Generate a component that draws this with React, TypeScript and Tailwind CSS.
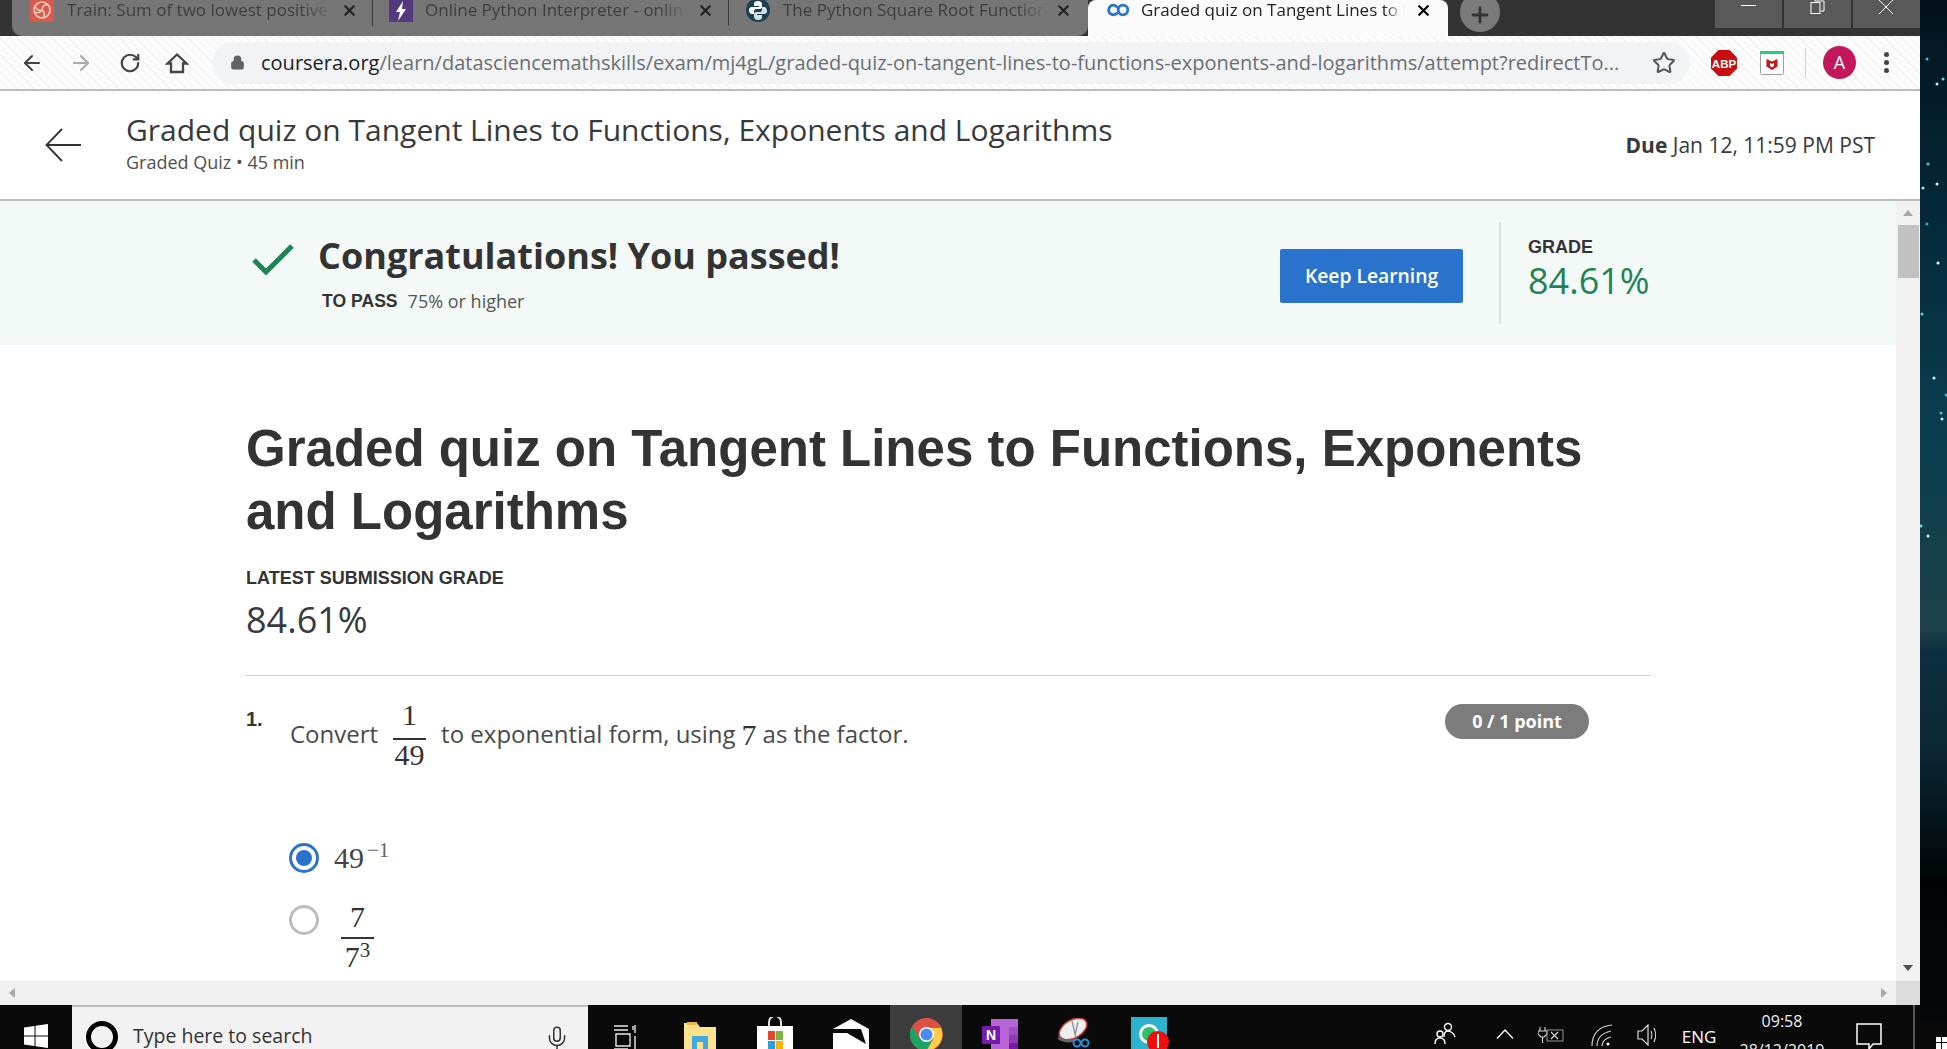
import React from 'react';
import { ArrowLeft, ArrowRight, RotateCw, Lock, Star, X, Plus, Mic } from 'lucide-react';

const url =
  '/learn/datasciencemathskills/exam/mj4gL/graded-quiz-on-tangent-lines-to-functions-exponents-and-logarithms/attempt?redirectTo...';

function SwirlIcon() {
  return (
    <svg width="24" height="22" viewBox="0 0 24 22" className="shrink-0">
      <rect width="24" height="22" fill="#d65a4d" />
      <circle cx="12" cy="10" r="8" fill="none" stroke="#f4c8c0" strokeWidth="1.6" />
      <path d="M12 10c0-4 3-6 6-5M12 10c3 2 3 6 1 8M12 10c-4 1-6-1-7-4M12 10c-2 3-5 3-7 2" fill="none" stroke="#f4c8c0" strokeWidth="1.6" />
    </svg>
  );
}

function BoltIcon() {
  return (
    <svg width="24" height="22" viewBox="0 0 24 22" className="shrink-0">
      <rect width="24" height="22" fill="#54397f" />
      <path d="M14 1 7 12h4l-2 9 8-12h-4z" fill="#fff" />
    </svg>
  );
}

function PythonIcon() {
  return (
    <svg width="24" height="24" viewBox="0 0 24 24" className="shrink-0">
      <circle cx="12" cy="10" r="12" fill="#1d3f52" />
      <path d="M12 1c-3 0-4 1-4 3v2h5v1H6c-2 0-3 1-3 3s1 4 3 4h2v-3c0-1 1-2 2-2h4c1 0 2-1 2-2V4c0-2-2-3-4-3z" fill="#fff" />
      <path d="M12 20c3 0 4-1 4-3v-2h-5v-1h7c2 0 3-1 3-3s-1-4-3-4h-2v3c0 1-1 2-2 2h-4c-1 0-2 1-2 2v3c0 2 2 3 4 3z" fill="#d7e0e6" />
    </svg>
  );
}

function CourseraIcon() {
  return (
    <svg width="24" height="14" viewBox="0 0 24 14" className="shrink-0">
      <path d="M11.500 4.500A4.800 4.800 0 1 0 11.500 9.500" fill="none" stroke="#2a73cc" strokeWidth="2.8" />
      <circle cx="17" cy="7" r="4.800" fill="none" stroke="#2a73cc" strokeWidth="2.8" />
    </svg>
  );
}

function Tab({ icon, title, width, pad, textWidth, gap }: { icon: React.ReactNode; title: string; width: string; pad: string; textWidth: string; gap: string }) {
  return (
    <div className={`flex h-[36px] shrink-0 items-start ${width} ${pad}`}>
      {icon}
      <div className={`whitespace-nowrap overflow-hidden text-[17px] leading-[20px] text-[#3d3d3d] [mask-image:linear-gradient(to_right,#000_88%,transparent)] ${textWidth} ${gap}`}>
        {title}
      </div>
      <X className="ml-auto mt-[2px] shrink-0 text-[#222]" size={17} strokeWidth={3} />
    </div>
  );
}

function TabDivider() {
  return <div className="h-[26px] w-[1px] shrink-0 bg-[#3c3c3c]" />;
}

function TabStrip() {
  return (
    <div className="flex h-[36px] shrink-0 bg-[#333333]">
      <div className="h-[36px] w-[12px] shrink-0 rounded-br-[8px] bg-[#333333]" />
      <div className="flex h-[36px] w-[1076px] shrink-0 rounded-b-[10px] bg-[#767676]">
        <Tab icon={<SwirlIcon />} title="Train: Sum of two lowest positive" width="w-[360px]" pad="pl-[18px] pr-[14px]" textWidth="w-[266px]" gap="ml-[13px]" />
        <TabDivider />
        <Tab icon={<BoltIcon />} title="Online Python Interpreter - online" width="w-[355px]" pad="pl-[16px] pr-[14px]" textWidth="w-[264px]" gap="ml-[12px]" />
        <TabDivider />
        <Tab icon={<PythonIcon />} title="The Python Square Root Function" width="w-[358px]" pad="pl-[17px] pr-[15px]" textWidth="w-[265px]" gap="ml-[13px]" />
      </div>
      <div className="flex h-[36px] w-[360px] shrink-0 items-start rounded-t-[8px] bg-[#fbfbfb] pl-[18px] pr-[16px]">
        <div className="pt-[3px]">
          <CourseraIcon />
        </div>
        <div className="ml-[11px] w-[264px] overflow-hidden whitespace-nowrap text-[17px] leading-[20px] text-[#222] [mask-image:linear-gradient(to_right,#000_92%,transparent)]">
          Graded quiz on Tangent Lines to Functions
        </div>
        <X className="ml-auto mt-[2px] shrink-0 text-black" size={17} strokeWidth={3.2} />
      </div>
      <div className="flex flex-1 items-start">
        <div className="ml-[12px] -mt-[8px] flex h-[40px] w-[40px] shrink-0 items-center justify-center rounded-full bg-[#7a7a7a]">
          <Plus className="mt-[6px] text-[#333]" size={24} strokeWidth={2.8} />
        </div>
        <div className="ml-auto flex h-[28px] overflow-hidden">
          <div className="w-[67px] bg-[#595959] pl-[26px] pt-[5px]">
            <div className="h-[1px] w-[15px] bg-white" />
          </div>
          <div className="ml-[2px] w-[67px] bg-[#595959] pl-[26px]">
            <svg width="15" height="14" viewBox="0 0 15 14" fill="none" stroke="#fff" strokeWidth="1"><path d="M5 0v1h9v10h-3" /><rect x="1" y="2.500" width="9" height="11" /></svg>
          </div>
          <div className="ml-[2px] w-[67px] bg-[#595959] pl-[25px]">
            <svg width="16" height="14" viewBox="0 0 16 14" fill="none" stroke="#fff" strokeWidth="1"><path d="M1 0l14 14M15 0 1 14" /></svg>
          </div>
        </div>
      </div>
    </div>
  );
}

function AbpIcon() {
  return (
    <svg width="26" height="26" viewBox="0 0 26 26">
      <path d="M7.500 0h11L26 7.500v11L18.500 26h-11L0 18.500v-11z" fill="#c70d0d" />
      <text x="13" y="17.500" textAnchor="middle" fontSize="11.500" fontWeight="700" fill="#fff" fontFamily="'Liberation Sans', sans-serif">ABP</text>
    </svg>
  );
}

function McAfeeIcon() {
  return (
    <svg width="24" height="24" viewBox="0 0 24 24">
      <rect x="0.500" y="1" width="23" height="22.500" rx="1" fill="#fff" stroke="#9e9e9e" />
      <rect x="0" y="0" width="24" height="3" fill="#1ed47a" />
      <path d="M6.500 8 12 10.500 17.500 8v7.500L12 19l-5.500-3.500z" fill="#c01818" />
      <path d="M10 12l2 1 2-1v3l-2 1.500L10 15z" fill="#fff" />
    </svg>
  );
}

function Toolbar() {
  return (
    <div className="flex h-[55px] shrink-0 items-center border-b-2 border-[#bdbdbd] bg-[#fbfbfb] bg-[repeating-linear-gradient(45deg,#f1f1f1_0,#f1f1f1_1px,#fcfcfc_1px,#fcfcfc_6px)]">
      <div className="flex w-[56px] justify-end pr-[12px]"><ArrowLeft className="text-[#444]" size={24} strokeWidth={2.1} /></div>
      <div className="flex w-[49px] justify-end pr-[12px]"><ArrowRight className="text-[#aaa]" size={24} strokeWidth={2.1} /></div>
      <div className="flex w-[48px] justify-end pr-[12px]"><RotateCw className="text-[#444]" size={22} strokeWidth={2.4} /></div>
      <div className="flex w-[48px] justify-end pr-[12px]">
        <svg width="24" height="24" viewBox="0 0 24 24" fill="none" stroke="#444" strokeWidth="2.300" strokeLinejoin="miter">
          <path d="M12 3.500 21.500 12.500H18V21H6V12.500H2.500z" />
        </svg>
      </div>
      <div className="ml-[11px] flex h-[42px] w-[1478px] items-center rounded-full bg-[#f1f3f4] pl-[18px]">
        <Lock className="shrink-0 fill-[#5f6368] text-[#5f6368]" size={15} strokeWidth={2.2} />
        <div className="ml-[16px] whitespace-nowrap text-[20px] leading-[28px] text-[#6b6f73]">
          <span className="text-[#202124]">coursera.org</span>
          {url}
        </div>
        <Star className="ml-auto mr-[14px] shrink-0 text-[#555]" size={24} strokeWidth={2} />
      </div>
      <div className="ml-[21px]"><AbpIcon /></div>
      <div className="ml-[23px]"><McAfeeIcon /></div>
      <div className="ml-[21px] h-[30px] w-[1px] bg-[#d0d0d0]" />
      <div className="ml-[17px] flex h-[33px] w-[33px] items-center justify-center rounded-full bg-[#c2185b] text-[18px] text-white">A</div>
      <div className="ml-[28px] flex flex-col gap-[3px]">
        <div className="h-[5px] w-[5px] rounded-full bg-[#444]" />
        <div className="h-[5px] w-[5px] rounded-full bg-[#444]" />
        <div className="h-[5px] w-[5px] rounded-full bg-[#444]" />
      </div>
    </div>
  );
}

function PageHeader() {
  return (
    <div className="flex h-[110px] shrink-0 items-center border-b-2 border-[#bdbdbd] bg-white pr-[45px]">
      <svg width="36" height="36" viewBox="0 0 36 36" fill="none" stroke="#333" strokeWidth="1.8" className="ml-[45px] shrink-0">
        <path d="M36 18H1.500M17 2 1.500 18 17 34" />
      </svg>
      <div className="ml-[45px] -mt-[6px]">
        <div className="text-[30px] leading-[40px] text-[#373a3c]">Graded quiz on Tangent Lines to Functions, Exponents and Logarithms</div>
        <div className="text-[18px] leading-[24px] text-[#4f4f4f]">Graded Quiz • 45 min</div>
      </div>
      <div className="ml-auto mt-[2px] text-[21px] text-[#373a3c]">
        <span className="font-bold">Due</span> Jan 12, 11:59 PM PST
      </div>
    </div>
  );
}

function Banner() {
  return (
    <div className="flex h-[144px] shrink-0 items-center bg-[#f3f9f7]">
      <svg width="42" height="32" viewBox="0 0 42 32" fill="none" stroke="#1f8354" strokeWidth="5" className="ml-[252px] -mt-[26px] shrink-0">
        <path d="M2 16 14 28 40 2" />
      </svg>
      <div className="ml-[24px] -mt-[2px]">
        <div className="text-[36px] font-bold leading-[50px] text-[#333]">Congratulations! You passed!</div>
        <div className="mt-[8px] flex items-center pl-[4px] text-[18px] leading-[24px] text-[#555]">
          <span className="font-['Liberation_Sans',Arial,sans-serif] text-[17.600px] font-bold text-[#333]">TO PASS</span>
          <span className="ml-[10px]">75% or higher</span>
        </div>
      </div>
      <button className="ml-auto mt-[6px] flex h-[54px] w-[183px] shrink-0 items-center justify-center rounded-[2px] bg-[#2a73cc] text-[19.300px] font-semibold text-white">
        Keep Learning
      </button>
      <div className="ml-[36px] h-[102px] w-[2px] shrink-0 bg-[#e1e1e1]" />
      <div className="ml-[27px] mr-[233px] -mt-[5px] w-[135px] shrink-0">
        <div className="font-['Liberation_Sans',Arial,sans-serif] text-[18px] font-bold leading-[20px] text-[#333]">GRADE</div>
        <div className="text-[36px] leading-[48px] text-[#1f8354]">84.61%</div>
      </div>
    </div>
  );
}

function Fraction({ top, bottom, topHeight }: { top: React.ReactNode; bottom: React.ReactNode; topHeight: string }) {
  return (
    <div className="flex flex-col items-center font-['Liberation_Serif',serif] text-[30px] text-[#333]">
      <div className={`leading-[34px] ${topHeight}`}>{top}</div>
      <div className="h-[2px] w-full bg-[#333]" />
      <div className="h-[30px] leading-[30px]">{bottom}</div>
    </div>
  );
}

function Question() {
  return (
    <div>
      <div className="flex items-start">
        <div className="w-[44px] shrink-0 pt-[6px] font-['Liberation_Sans',Arial,sans-serif] text-[20px] font-bold leading-[28px] text-[#333]">1.</div>
        <div className="flex h-[70px] items-center whitespace-nowrap text-[24px] text-[#4a4a4a]">
          <span>Convert</span>
          <div className="mx-[15px] w-[33px]">
            <Fraction top="1" bottom="49" topHeight="h-[40px]" />
          </div>
          <span>to exponential form, using</span>
          <span className="mx-[6px] font-['Liberation_Serif',serif] text-[30px] text-[#333]">7</span>
          <span>as the factor.</span>
        </div>
        <div className="ml-auto mr-[61px] mt-[5px] flex h-[35px] w-[144px] shrink-0 items-center justify-center rounded-full bg-[#7c7c7c] text-[18px] font-bold text-white">
          0 / 1 point
        </div>
      </div>
      <div className="mt-[71px] flex items-center pl-[43px]">
        <div className="flex h-[30px] w-[30px] shrink-0 items-center justify-center rounded-full border-[3px] border-[#2a73cc]">
          <div className="h-[16px] w-[16px] rounded-full bg-[#2a73cc]" />
        </div>
        <div className="ml-[15px] flex items-start font-['Liberation_Serif',serif] text-[30px] leading-[36px] text-[#444]">
          49
          <span className="ml-[3px] mt-[-8px] text-[21px] text-[#666]">−1</span>
        </div>
      </div>
      <div className="mt-[13px] flex items-start pl-[43px]">
        <div className="mt-[16px] h-[30px] w-[30px] shrink-0 rounded-full border-[3px] border-[#bdbdbd]" />
        <div className="ml-[22px] mt-[11px] w-[33px]">
          <Fraction
            top="7"
            bottom={
              <span className="mt-[3px] flex items-start">
                7<span className="mt-[-7px] text-[21px]">3</span>
              </span>
            }
            topHeight="h-[37px]"
          />
        </div>
      </div>
    </div>
  );
}

function Main() {
  return (
    <div className="min-w-0 flex-1 overflow-hidden bg-white">
      <Banner />
      <div className="ml-[246px] w-[1404px] pt-[72px]">
        <h1 className="font-['Liberation_Sans',Arial,sans-serif] text-[51px] font-bold leading-[63px] text-[#333]">
          Graded quiz on Tangent Lines to Functions, Exponents and Logarithms
        </h1>
        <div className="mt-[25px] font-['Liberation_Sans',Arial,sans-serif] text-[18px] font-bold leading-[20px] text-[#333]">LATEST SUBMISSION GRADE</div>
        <div className="mt-[9px] text-[36px] leading-[46px] text-[#373a3c]">84.61%</div>
        <div className="mt-[32px] h-[1px] bg-[#d0d0d0]" />
        <div className="mt-[23px]">
          <Question />
        </div>
      </div>
    </div>
  );
}

function VerticalScrollbar() {
  return (
    <div className="flex w-[24px] shrink-0 flex-col items-center bg-[#f1f1f1]">
      <div className="mt-[9px] h-0 w-0 border-x-[5px] border-b-[6px] border-x-transparent border-b-[#a6a6a6]" />
      <div className="mt-[9px] h-[53px] w-[21px] bg-[#c1c1c1]" />
      <div className="mt-auto mb-[10px] h-0 w-0 border-x-[5px] border-t-[6px] border-x-transparent border-t-[#505050]" />
    </div>
  );
}

function HorizontalScrollbar() {
  return (
    <div className="flex h-[24px] shrink-0 items-center bg-[#f0f0f0]">
      <div className="ml-[9px] h-0 w-0 border-y-[5px] border-r-[6px] border-y-transparent border-r-[#a6a6a6]" />
      <div className="ml-auto mr-[9px] h-0 w-0 border-y-[5px] border-l-[6px] border-y-transparent border-l-[#a6a6a6]" />
      <div className="h-[24px] w-[24px] bg-[#dcdcdc]" />
    </div>
  );
}

function TaskCell({ width, top, active, children }: { width: string; top: string; active?: boolean; children: React.ReactNode }) {
  return (
    <div className={`flex h-[44px] shrink-0 justify-center ${width} ${top} ${active ? 'bg-[#3c3c3c]' : ''}`}>{children}</div>
  );
}

function Taskbar() {
  return (
    <div className="flex h-[44px] shrink-0 overflow-hidden bg-[#0a0a0b] text-white">
      <div className="flex w-[72px] shrink-0 justify-center pt-[19px]">
        <svg width="24" height="24" viewBox="0 0 24 24" fill="#fff"><path d="M0 3.500 10.500 2v9.500H0zM11.500 1.800 24 0v11.500H11.500zM0 12.500h10.500V22L0 20.500zM11.500 12.500H24V24l-12.500-1.800z" /></svg>
      </div>
      <div className="flex h-[44px] w-[516px] shrink-0 items-start border-t-2 border-[#bdbdbd] bg-[#f2f2f2] pl-[14px]">
        <div className="mt-[14px] h-[32px] w-[32px] shrink-0 rounded-full border-[5px] border-black" />
        <div className="ml-[15px] mt-[15px] text-[19.500px] leading-[28px] text-[#333]">Type here to search</div>
        <Mic className="ml-auto mr-[18px] mt-[18px] shrink-0 text-[#333]" size={26} strokeWidth={1.4} />
      </div>
      <TaskCell width="w-[74px]" top="pt-[20px]">
        <svg width="24" height="26" viewBox="0 0 24 26" fill="none" stroke="#e8e8e8" strokeWidth="1.4">
          <path d="M1 1h14M1 5h14M20 1v4M22 0v8M3 9h14v12H3zM22 11v14M1 24h14" />
        </svg>
      </TaskCell>
      <TaskCell width="w-[75px]" top="pt-[17px]">
        <svg width="32" height="30" viewBox="0 0 32 30">
          <path d="M0 1h13l3 4h16v25H0z" fill="#fde28d" />
          <rect x="3" y="0" width="10" height="3" fill="#e9b949" />
          <path d="M8 30V14h16v16h-5V20h-6v10z" fill="#3fa9e0" />
        </svg>
      </TaskCell>
      <TaskCell width="w-[75px]" top="pt-[12px]">
        <svg width="36" height="34" viewBox="0 0 36 34">
          <path d="M12 10V5a6 6 0 0 1 12 0v5" fill="none" stroke="#e0e0e0" strokeWidth="2" />
          <rect y="9" width="36" height="25" fill="#fff" />
          <rect x="11" y="14" width="7" height="9" fill="#e8452c" /><rect x="19" y="14" width="7" height="9" fill="#7cb342" />
          <rect x="11" y="24" width="7" height="9" fill="#2a9fd8" /><rect x="19" y="24" width="7" height="9" fill="#f5b400" />
        </svg>
      </TaskCell>
      <TaskCell width="w-[78px]" top="pt-[14px]">
        <svg width="36" height="32" viewBox="0 0 36 32">
          <path d="M18 0 36 10v22H0V10z" fill="#fff" />
          <path d="M0 10h28l5 15-19-11H0z" fill="#0a0a0b" />
        </svg>
      </TaskCell>
      <TaskCell width="w-[72px]" top="pt-[13px]" active>
        <svg width="33" height="33" viewBox="0 0 33 33">
          <circle cx="16.500" cy="16.500" r="16.500" fill="#dd5144" />
          <path d="M2.200 8.200A16.500 16.500 0 0 0 16.500 33l7-12.500h-14z" fill="#1da462" />
          <path d="M16.500 10H31a16.500 16.500 0 0 1-14.500 23l7-12.500z" fill="#ffcd46" />
          <circle cx="16.500" cy="16.500" r="7.500" fill="#fff" />
          <circle cx="16.500" cy="16.500" r="6" fill="#4c8bf5" />
        </svg>
      </TaskCell>
      <TaskCell width="w-[75px]" top="pt-[14px]">
        <svg width="36" height="30" viewBox="0 0 36 30">
          <rect x="9" width="27" height="30" fill="#b765d6" />
          <rect x="27" y="8" width="9" height="8" fill="#a04ec4" /><rect x="27" y="16" width="9" height="8" fill="#8f3bb2" /><rect x="27" y="24" width="9" height="6" fill="#7719aa" />
          <rect y="7" width="18" height="18" rx="1" fill="#7719aa" />
          <text x="9" y="21" textAnchor="middle" fontSize="14" fontWeight="700" fill="#fff" fontFamily="'Liberation Sans', sans-serif">N</text>
        </svg>
      </TaskCell>
      <TaskCell width="w-[75px]" top="pt-[13px]">
        <svg width="34" height="32" viewBox="0 0 34 32">
          <ellipse cx="15" cy="11" rx="15" ry="9" transform="rotate(-30 15 11)" fill="#eee" stroke="#d23a3a" strokeWidth="1.5" />
          <path d="M1 17c6 6 12 5 17 3l-3 4c-6 1-12 0-15-3z" fill="#666" />
          <path d="M14 3l4 17M20 4l-3 13" stroke="#888" strokeWidth="1.2" />
          <circle cx="19" cy="25" r="3.500" fill="none" stroke="#2a8fd8" strokeWidth="2" />
          <circle cx="27" cy="25" r="3.500" fill="none" stroke="#2a8fd8" strokeWidth="2" />
        </svg>
      </TaskCell>
      <TaskCell width="w-[75px]" top="pt-[12px]">
        <svg width="38" height="32" viewBox="0 0 38 32">
          <rect width="36" height="32" fill="#2bb3cf" />
          <circle cx="18" cy="17" r="10" fill="#fff" />
          <circle cx="18" cy="17" r="7" fill="#27c26a" />
          <circle cx="27" cy="25" r="11" fill="#ef0f0f" />
          <rect x="26" y="17" width="2" height="14" fill="#fff" />
        </svg>
      </TaskCell>
      <div className="flex-1" />
      <TaskCell width="w-[60px]" top="pt-[17px]">
        <svg width="24" height="22" viewBox="0 0 24 22" fill="none" stroke="#fff" strokeWidth="1.4">
          <circle cx="15" cy="5" r="3.500" /><path d="M11 15c0-4 2-6 4-6s6 2 7 6" /><circle cx="7" cy="12" r="3" /><path d="M2 22c0-4 2-6 5-6s5 2 5 6" />
        </svg>
      </TaskCell>
      <TaskCell width="w-[60px]" top="pt-[24px]">
        <svg width="18" height="10" viewBox="0 0 18 10" fill="none" stroke="#fff" strokeWidth="1.3"><path d="M1 9.500 9 1l8 8.500" /></svg>
      </TaskCell>
      <TaskCell width="w-[32px]" top="pt-[21px]">
        <svg width="26" height="18" viewBox="0 0 26 18" fill="none" stroke="#ddd" strokeWidth="1.1">
          <path d="M2 1v4M7 1v4M0 5h9v3l-3 3H3L0 8zM4.500 11v6" /><rect x="9" y="4" width="16" height="11" stroke="#888" /><path d="m13 6 7 7M20 6l-7 7" />
        </svg>
      </TaskCell>
      <TaskCell width="w-[70px]" top="pt-[19px]">
        <svg width="22" height="22" viewBox="0 0 22 22" fill="none" stroke="#ccc" strokeWidth="1.2">
          <path d="M1 22C1 10 8 2 21 1M6 22c0-8 5-13 14-15M11 22c0-4 3-8 9-9" /><circle cx="17" cy="20" r="1.500" fill="#fff" stroke="none" />
        </svg>
      </TaskCell>
      <TaskCell width="w-[22px]" top="pt-[19px]">
        <svg width="22" height="22" viewBox="0 0 22 22" fill="none" stroke="#ddd" strokeWidth="1.2">
          <path d="M1 7h4l6-6v20l-6-6H1zM14 7c1 2 1 6 0 8M17 4c2 4 2 10 0 14" />
        </svg>
      </TaskCell>
      <div className="w-[80px] shrink-0 pt-[20px] text-center text-[17px] leading-[24px]">ENG</div>
      <div className="w-[86px] shrink-0 pt-[2px] text-center text-[16px] leading-[29px] text-[#f0f0f0]">
        <div>09:58</div>
        <div>28/12/2019</div>
      </div>
      <TaskCell width="w-[88px]" top="pt-[18px]">
        <svg width="26" height="30" viewBox="0 0 26 30" fill="none" stroke="#fff" strokeWidth="1.5"><path d="M1 1h24v20H17l-4 5v-5H1z" /></svg>
      </TaskCell>
      <div className="h-[44px] w-[2px] shrink-0 bg-[#555]" />
      <div className="w-[5px] shrink-0" />
    </div>
  );
}

const stars: [number, number, string][] = [
  [7, 59, '#36c6d8'], [17, 84, '#bff4ff'], [23, 79, '#5fd8ee'], [8, 164, '#58d0e4'], [17, 184, '#e4fbff'],
  [3, 188, '#a8eefb'], [7, 224, '#36b0c6'], [18, 263, '#f0ffff'], [2, 314, '#5fd0e4'], [14, 378, '#d8f4f8'],
  [26, 395, '#36b0c6'], [21, 413, '#5cc0d0'], [22, 419, '#bfeef8'], [1, 526, '#70dcec'], [8, 536, '#e0f4f8'],
];

function Wallpaper() {
  return (
    <div className="h-full w-[27px] shrink-0 bg-[linear-gradient(180deg,#03121c_0%,#04283a_20%,#0a3f50_42%,#1d3f4a_60%,#0e2f42_62%,#0a2632_72%,#010406_84%,#05080a_97%,#0a0a0b_98%)]">
      <svg width="27" height="1049" viewBox="0 0 27 1049" className="block">
        {stars.map(([x, y, c]) => (
          <circle key={`${x}-${y}`} cx={x} cy={y} r="1.500" fill={c} />
        ))}
        <path d="M16 1037h5v5h-5zM22 1037h5v5h-5zM16 1043h5v6h-5zM22 1043h5v6h-5z" fill="#fff" />
      </svg>
    </div>
  );
}

export default function App() {
  return (
    <div className="flex h-screen w-full overflow-hidden bg-black font-['Open_Sans',sans-serif]">
      <div className="flex w-[1920px] shrink-0 flex-col">
        <TabStrip />
        <Toolbar />
        <PageHeader />
        <div className="flex min-h-0 flex-1">
          <Main />
          <VerticalScrollbar />
        </div>
        <HorizontalScrollbar />
        <Taskbar />
      </div>
      <Wallpaper />
    </div>
  );
}
